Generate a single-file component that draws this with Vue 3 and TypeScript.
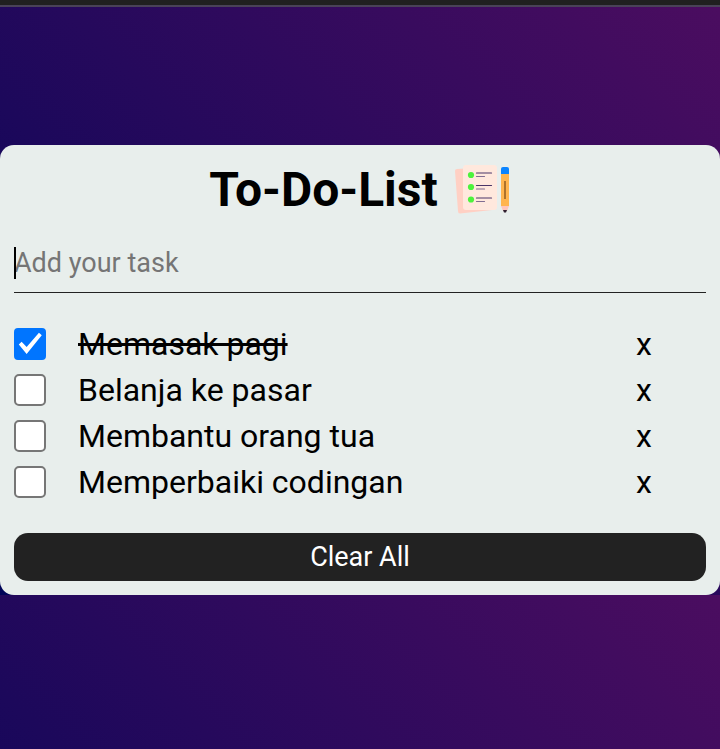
<script setup lang="ts">
import { ref } from 'vue'

interface Task {
  id: number
  text: string
  done: boolean
}

const draft = ref('')
const tasks = ref<Task[]>([
  { id: 1, text: 'Memasak pagi', done: true },
  { id: 2, text: 'Belanja ke pasar', done: false },
  { id: 3, text: 'Membantu orang tua', done: false },
  { id: 4, text: 'Memperbaiki codingan', done: false },
])

function addTask(): void {
  const text = draft.value.trim()
  if (!text) return
  tasks.value.push({ id: Date.now(), text, done: false })
  draft.value = ''
}

function removeTask(id: number): void {
  tasks.value = tasks.value.filter((task) => task.id !== id)
}

function clearAll(): void {
  tasks.value = []
}
</script>

<template>
  <div class="page">
    <div class="topbar"></div>
    <main class="stage">
      <section class="card">
        <h1 class="title">
          To-Do-List
          <svg class="title-icon" viewBox="0 0 56 50" aria-hidden="true">
            <path d="M2 4 L34 2 L37 45 L5 48.500 Q3 48.500 3 46 L0 6 Q0 4 2 4Z" fill="#ffd0c4" />
            <rect x="8" y="0" width="34" height="45" rx="3" fill="#ffe8dd" />
            <g fill="#4cf33c">
              <circle cx="16" cy="10" r="3.100" />
              <circle cx="16" cy="22" r="3.100" />
              <circle cx="16" cy="34.500" r="3.100" />
            </g>
            <g stroke="#4b3568" stroke-width="1.200" stroke-linecap="round">
              <path d="M21.500 8H36.500M21.500 20.500H36.500M21.500 33H36.500" />
              <path d="M21.500 11.500H29.500M21.500 24H29.500M21.500 36.500H29.500" stroke="#806d91" />
            </g>
            <path d="M46 8H54V41H46Z" fill="#ffb54f" />
            <path d="M46 9V4Q46 2 48 2H52Q54 2 54 4V9Z" fill="#0b84ff" />
            <path d="M46 41H54L52 46H48Z" fill="#ffc5bb" />
            <path d="M48 45H52L51 47.500H49Z" fill="#302030" />
            <path d="M50 16V34" stroke="#925c20" stroke-width="1.500" />
          </svg>
        </h1>
        <form class="entry" @submit.prevent="addTask">
          <input v-model="draft" class="entry-input" type="text" placeholder="Add your task" aria-label="Add your task" />
        </form>
        <ul class="tasks">
          <li v-for="task in tasks" :key="task.id" class="task">
            <input :id="`task-${task.id}`" v-model="task.done" class="task-check" type="checkbox" />
            <label class="task-label" :class="{ done: task.done }" :for="`task-${task.id}`">{{ task.text }}</label>
            <button class="task-remove" type="button" @click="removeTask(task.id)">x</button>
          </li>
        </ul>
        <button class="clear" type="button" @click="clearAll">Clear All</button>
      </section>
    </main>
  </div>
</template>

<style>
body {
  margin: 0;
}
</style>

<style scoped>
.page {
  min-height: 100vh;
  display: flex;
  flex-direction: column;
  font-family: Roboto, sans-serif;
  color: #000;
}

.topbar {
  height: 5px;
  background: #202020;
  border-bottom: 2px solid #494257;
}

.stage {
  flex: 1;
  padding-top: 138px;
  background: linear-gradient(45deg, #000558, #4b0d60) 0 0 / 100% 588px;
}

.card {
  box-sizing: border-box;
  padding: 14px;
  border-radius: 14px;
  background: #e8eeec;
}

.title {
  display: flex;
  justify-content: center;
  align-items: center;
  gap: 17px;
  margin: 0;
  font-size: 48px;
  line-height: 62px;
  font-weight: 700;
}

.title-icon {
  width: 56px;
  height: 50px;
}

.entry {
  position: relative;
  margin-top: 12px;
  border-bottom: 1px solid #222;
}

.entry::before {
  content: '';
  position: absolute;
  left: 0;
  top: 14px;
  width: 2px;
  height: 32px;
  background: #000;
}

.entry-input {
  display: block;
  box-sizing: border-box;
  width: 100%;
  height: 59px;
  padding: 0;
  border: 0;
  outline: 0;
  background: transparent;
  font: 27px/32px Roboto, sans-serif;
}

.entry-input::placeholder {
  color: #757575;
}

.tasks {
  margin: 28px 0;
  padding: 0;
  list-style: none;
}

.task {
  display: flex;
  align-items: center;
  height: 46px;
  font-size: 32px;
}

.task-check {
  flex: none;
  appearance: none;
  box-sizing: border-box;
  width: 32px;
  height: 32px;
  margin: 0 32px 0 0;
  border: 2px solid #767676;
  border-radius: 5px;
  background: #fff;
}

.task-check:checked {
  border-color: #0075ff;
  border-radius: 4px;
  background: #0075ff;
}

.task-check:checked::before {
  content: '';
  display: block;
  width: 28px;
  height: 28px;
  background: #fff;
  clip-path: polygon(10% 52%, 20% 42%, 38% 61%, 82% 10%, 92% 19%, 38% 86%);
}

.task-label {
  flex: 1;
}

.task-label.done {
  text-decoration: line-through;
}

.task-remove {
  width: 16px;
  margin: 0 54px 0 0;
  padding: 0;
  border: 0;
  background: transparent;
  color: inherit;
  font: inherit;
  text-align: center;
}

.clear {
  display: block;
  width: 100%;
  height: 48px;
  padding: 0;
  border: 0;
  border-radius: 14px;
  background: #222;
  color: #fff;
  font: 27px/32px Roboto, sans-serif;
}
</style>
